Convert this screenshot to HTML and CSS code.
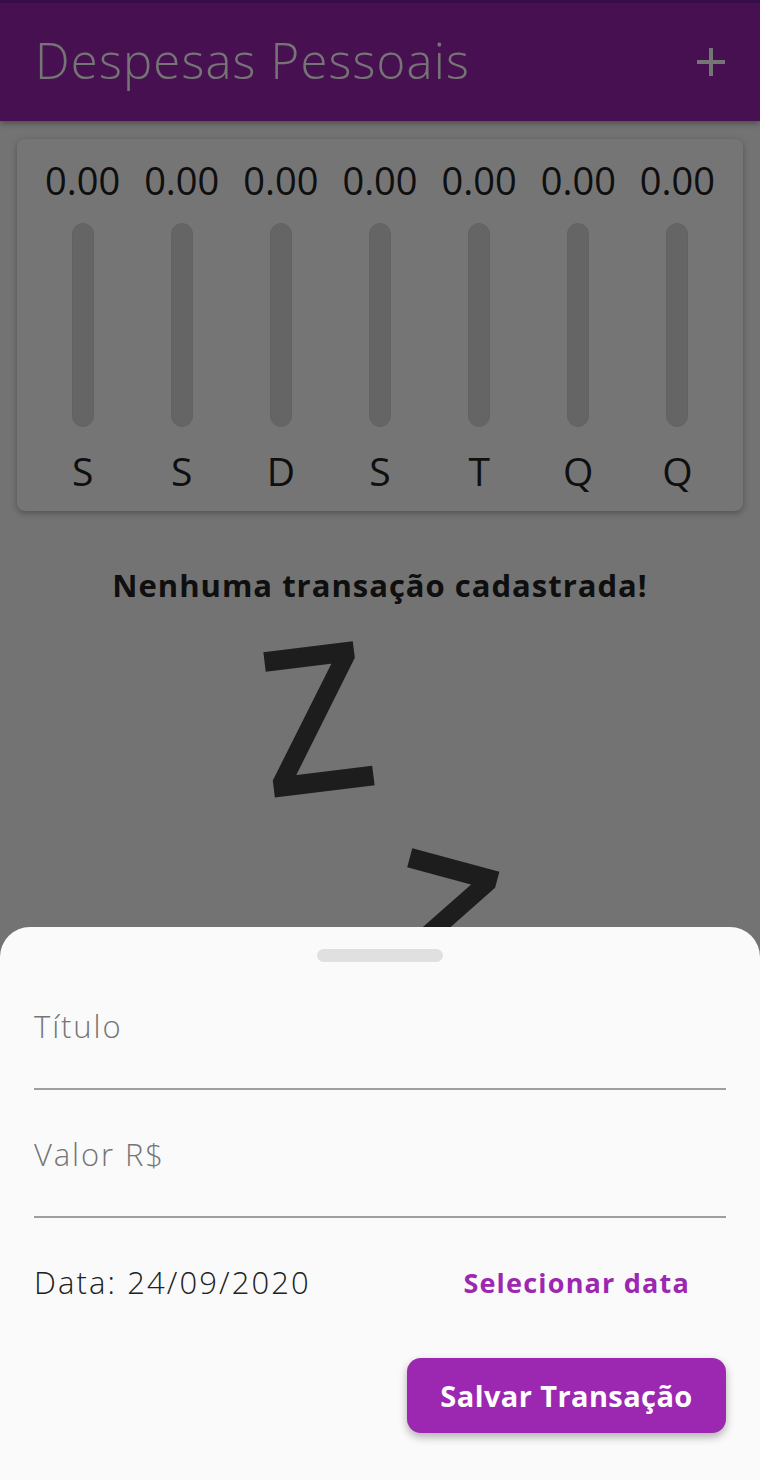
FILE: index.html
```html
<!DOCTYPE html>
<html lang="pt-BR">
<head>
<meta charset="utf-8">
<title>Despesas Pessoais</title>
<link rel="stylesheet" href="styles.css">
</head>
<body>
<div class="app">
  <header class="appbar">
    <h1 class="appbar-title">Despesas Pessoais</h1>
    <button class="appbar-action" aria-label="Adicionar">
      <svg width="30" height="30" viewBox="0 0 30 30"><path d="M15 1v28M1 15h28" stroke="currentColor" stroke-width="4" fill="none"/></svg>
    </button>
  </header>

  <main class="content">
    <section class="chart-card">
      <div class="chart-col"><span class="chart-value">0.00</span><div class="chart-bar"></div><span class="chart-label">S</span></div>
      <div class="chart-col"><span class="chart-value">0.00</span><div class="chart-bar"></div><span class="chart-label">S</span></div>
      <div class="chart-col"><span class="chart-value">0.00</span><div class="chart-bar"></div><span class="chart-label">D</span></div>
      <div class="chart-col"><span class="chart-value">0.00</span><div class="chart-bar"></div><span class="chart-label">S</span></div>
      <div class="chart-col"><span class="chart-value">0.00</span><div class="chart-bar"></div><span class="chart-label">T</span></div>
      <div class="chart-col"><span class="chart-value">0.00</span><div class="chart-bar"></div><span class="chart-label">Q</span></div>
      <div class="chart-col"><span class="chart-value">0.00</span><div class="chart-bar"></div><span class="chart-label">Q</span></div>
    </section>

    <p class="empty-text">Nenhuma transação cadastrada!</p>
    <div class="empty-image" aria-hidden="true">
      <span class="zz zz-one">Z</span>
      <span class="zz zz-two">Z</span>
    </div>
  </main>

  <div class="scrim"></div>

  <section class="sheet">
    <div class="sheet-handle"></div>
    <div class="field"><span class="field-label">Título</span></div>
    <div class="field"><span class="field-label">Valor R$</span></div>
    <div class="date-row">
      <span class="date-text">Data: 24/09/2020</span>
      <button class="text-button">Selecionar data</button>
    </div>
    <div class="actions">
      <button class="primary-button">Salvar Transação</button>
    </div>
  </section>
</div>
</body>
</html>
```

FILE: styles.css
```css
* { box-sizing: border-box; }

html, body {
  margin: 0;
  padding: 0;
  width: 760px;
  height: 1480px;
  overflow: hidden;
  background: #fafafa;
  font-family: "Open Sans", "Noto Sans", sans-serif;
}

.app {
  position: relative;
  width: 760px;
  height: 1480px;
  background: #fafafa;
}

.appbar {
  height: 121px;
  background: #9c27b0;
  border-top: 3px solid #7b1fa2;
  display: flex;
  align-items: center;
  justify-content: space-between;
  padding: 0 34px 0 35px;
  box-shadow: 0 2px 6px rgba(0,0,0,0.35);
}

.appbar-title {
  margin: 0 0 4px;
  font-weight: 300;
  font-size: 49px;
  letter-spacing: 1.2px;
  color: #ffffff;
}

.appbar-action {
  border: 0;
  background: none;
  padding: 0;
  color: #ffffff;
  display: flex;
}

.content {
  padding: 18px 17px 0;
}

.chart-card {
  height: 372px;
  background: #ffffff;
  border-radius: 8px;
  box-shadow: 0 2px 6px rgba(0,0,0,0.3);
  display: flex;
  padding: 20px 16px 0;
}

.chart-col {
  flex: 1;
  display: flex;
  flex-direction: column;
  align-items: center;
}

.chart-value {
  font-size: 38px;
  line-height: 42px;
  color: #212121;
  letter-spacing: 0;
}

.chart-bar {
  margin-top: 22px;
  width: 22px;
  height: 204px;
  border-radius: 11px;
  background: #dcdcdc;
  border: 1px solid #d6d6d6;
}

.chart-label {
  margin-top: 20px;
  font-size: 39px;
  line-height: 48px;
  color: #212121;
}

.empty-text {
  margin: 52px 0 0;
  text-align: center;
  font-weight: 700;
  font-size: 31px;
  line-height: 44px;
  letter-spacing: 1px;
  color: #212121;
}

.empty-image {
  position: relative;
  height: 400px;
}

.zz {
  position: absolute;
  font-family: "Liberation Sans", sans-serif;
  font-size: 206px;
  line-height: 1;
  color: #404040;
  -webkit-text-stroke: 4px #404040;
}

.zz-one {
  left: 236px;
  top: 9px;
  transform: rotate(-7deg) scaleX(0.86);
}

.zz-two {
  left: 356px;
  top: 220px;
  transform: rotate(15deg) scaleX(0.86);
}

.scrim {
  position: absolute;
  inset: 0;
  background: rgba(0,0,0,0.54);
}

.sheet {
  position: absolute;
  left: 0;
  right: 0;
  top: 927px;
  bottom: 0;
  background: #fafafa;
  border-radius: 30px 30px 0 0;
  padding: 22px 34px 0;
  display: flex;
  flex-direction: column;
}

.sheet-handle {
  align-self: center;
  width: 126px;
  height: 13px;
  border-radius: 7px;
  background: #e0e0e0;
}

.field {
  height: 128px;
  border-bottom: 2px solid #9e9e9e;
  display: flex;
  align-items: flex-end;
  padding-bottom: 41px;
}

.field:first-of-type { height: 127px; }

.field-label {
  font-size: 31px;
  font-weight: 300;
  letter-spacing: 1.9px;
  color: #757575;
}

.date-row {
  margin-top: 44px;
  display: flex;
  align-items: center;
  justify-content: space-between;
  height: 40px;
}

.date-text {
  font-size: 31px;
  font-weight: 300;
  color: #212121;
  letter-spacing: 2.1px;
}

.text-button {
  border: 0;
  background: none;
  padding: 0 36px 0 0;
  font-family: inherit;
  font-size: 27px;
  font-weight: 700;
  color: #9c27b0;
  letter-spacing: 1.2px;
}

.actions {
  margin-top: 56px;
  display: flex;
  justify-content: flex-end;
}

.primary-button {
  width: 319px;
  height: 75px;
  border: 0;
  border-radius: 14px;
  background: #9c27b0;
  color: #ffffff;
  font-family: inherit;
  font-size: 29px;
  font-weight: 700;
  letter-spacing: 0.4px;
  box-shadow: 0 4px 8px rgba(0,0,0,0.3);
}
```
